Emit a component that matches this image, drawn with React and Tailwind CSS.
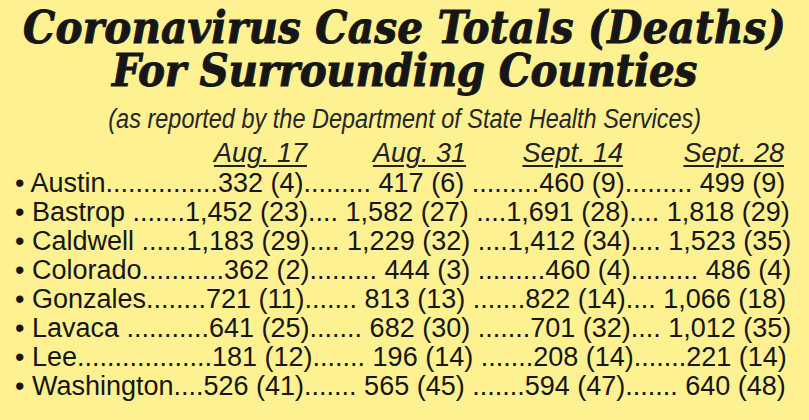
import React from 'react';

const rows = [
  '• Austin...............332 (4)......... 417 (6) .........460 (9)......... 499 (9)',
  '• Bastrop .......1,452 (23).... 1,582 (27) ....1,691 (28).... 1,818 (29)',
  '• Caldwell ......1,183 (29).... 1,229 (32) ....1,412 (34).... 1,523 (35)',
  '• Colorado...........362 (2)......... 444 (3) .........460 (4)......... 486 (4)',
  '• Gonzales........721 (11)....... 813 (13) .......822 (14).... 1,066 (18)',
  '• Lavaca ...........641 (25)....... 682 (30) .......701 (32).... 1,012 (35)',
  '• Lee..................181 (12)....... 196 (14) .......208 (14).......221 (14)',
  '• Washington....526 (41)....... 565 (45) .......594 (47)....... 640 (48)',
];

const App = () => {
  return (
    <div className="w-[809px] h-[420px] bg-[#fdf191] text-[#161616] overflow-hidden">
      {/* Headline */}
      <div className="pt-[6px] text-center font-['DejaVu_Serif_Condensed','DejaVu_Serif',serif] font-bold italic text-[45px] leading-[43px] [-webkit-text-stroke:0.9px_#161616]">
        <div className="tracking-[0.2px]">Coronavirus Case Totals (Deaths)</div>
        <div className="tracking-[-0.3px]">For Surrounding Counties</div>
      </div>
      <p className="mt-[12px] text-center font-['Liberation_Sans',Arial,sans-serif] italic text-[27px] leading-[30px] text-[#262626]">
        <span className="inline-block scale-x-[0.87] origin-center whitespace-nowrap">
          (as reported by the Department of State Health Services)
        </span>
      </p>

      {/* Table */}
      <div className="mt-[5px] font-['Liberation_Sans',Arial,sans-serif] text-[27px]">
        <div className="flex italic leading-[28px] text-[#222]">
          <div className="w-[307px] text-right"><span className="underline underline-offset-[3px] decoration-[1.5px]">Aug. 17</span></div>
          <div className="w-[159px] text-right"><span className="underline underline-offset-[3px] decoration-[1.5px]">Aug. 31</span></div>
          <div className="w-[157px] text-right"><span className="underline underline-offset-[3px] decoration-[1.5px]">Sept. 14</span></div>
          <div className="w-[161px] text-right"><span className="underline underline-offset-[3px] decoration-[1.5px]">Sept. 28</span></div>
        </div>
        <div className="mt-[2px] pl-[15px]">
          {rows.map((row, i) => (
            <div key={i} className="leading-[29px] whitespace-pre">{row}</div>
          ))}
        </div>
      </div>
    </div>
  );
};

export default App;
